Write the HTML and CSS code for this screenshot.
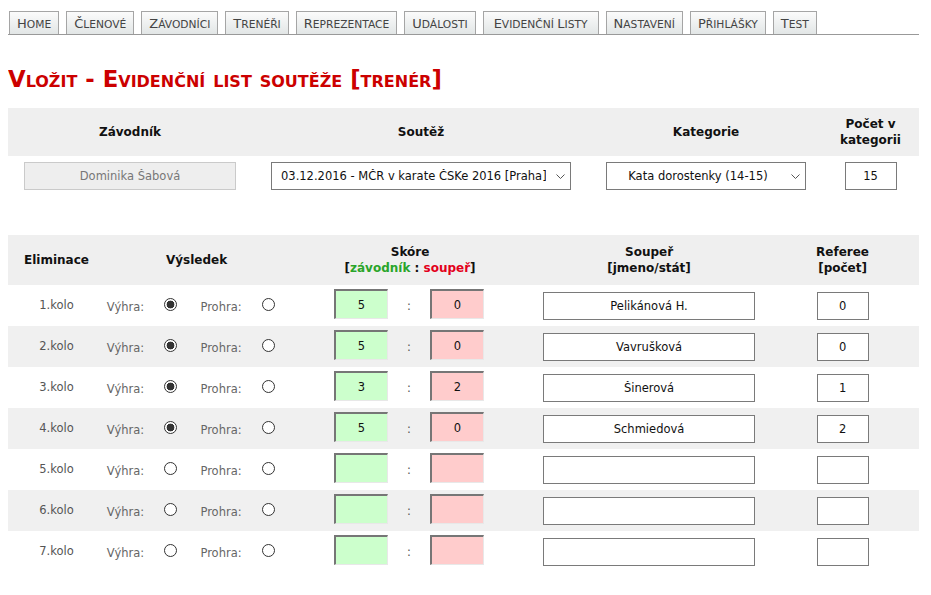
FILE: index.html
```html
<!DOCTYPE html>
<html lang="cs">
<head>
<meta charset="utf-8">
<title>Vložit - Evidenční list soutěže</title>
<link rel="stylesheet" href="styles.css">
</head>
<body>
<nav class="tabs">
  <a class="tab"><span class="cap">H</span>ome</a>
  <a class="tab"><span class="cap">Č</span>lenové</a>
  <a class="tab"><span class="cap">Z</span>ávodníci</a>
  <a class="tab"><span class="cap">T</span>renéři</a>
  <a class="tab"><span class="cap">R</span>eprezentace</a>
  <a class="tab"><span class="cap">U</span>dálosti</a>
  <a class="tab tab-wide"><span class="cap">E</span>videnční <span class="cap">L</span>isty</a>
  <a class="tab"><span class="cap">N</span>astavení</a>
  <a class="tab"><span class="cap">P</span>řihlášky</a>
  <a class="tab"><span class="cap">T</span>est</a>
</nav>

<h1 class="title">Vložit - Evidenční list soutěže [trenér]</h1>

<table class="info">
  <colgroup><col class="i1"><col class="i2"><col class="i3"><col class="i4"></colgroup>
  <thead>
    <tr class="head"><th>Závodník</th><th>Soutěž</th><th>Kategorie</th><th>Počet v<br>kategorii</th></tr>
  </thead>
  <tbody>
    <tr class="inforow">
      <td><input class="athlete" type="text" value="Dominika Šabová" readonly></td>
      <td><span class="selwrap sel-comp"><select class="sel"><option>03.12.2016 - MČR v karate ČSKe 2016 [Praha]</option></select><svg class="chev" width="9" height="5" viewBox="0 0 9 5"><path d="M0.5 0.5 L4.5 4.5 L8.5 0.5" fill="none" stroke="#555" stroke-width="1"/></svg></span></td>
      <td><span class="selwrap sel-cat"><select class="sel center"><option>Kata dorostenky (14-15)</option></select><svg class="chev" width="9" height="5" viewBox="0 0 9 5"><path d="M0.5 0.5 L4.5 4.5 L8.5 0.5" fill="none" stroke="#555" stroke-width="1"/></svg></span></td>
      <td><input class="box count" type="text" value="15"></td>
    </tr>
  </tbody>
</table>

<table class="rounds">
  <colgroup>
    <col class="c1"><col class="c2"><col class="c3"><col class="c4"><col class="c5">
    <col class="c6"><col class="c7"><col class="c8"><col class="c9"><col class="c10">
  </colgroup>
  <thead>
    <tr class="head2">
      <th>Eliminace</th>
      <th colspan="4">Výsledek</th>
      <th colspan="3">Skóre<br>[<span class="g">závodník</span> : <span class="r">soupeř</span>]</th>
      <th>Soupeř<br>[jmeno/stát]</th>
      <th>Referee<br>[počet]</th>
    </tr>
  </thead>
  <tbody>
    <tr>
      <td class="kolo">1.kolo</td><td class="lbl">Výhra:</td><td><input class="radio" type="radio" name="r1" checked></td><td class="lbl">Prohra:</td><td><input class="radio" type="radio" name="r1"></td>
      <td class="sl"><input class="score win" type="text" value="5"></td><td class="colon">:</td><td class="sr"><input class="score lose" type="text" value="0"></td>
      <td><input class="box opp" type="text" value="Pelikánová H."></td><td><input class="box ref" type="text" value="0"></td>
    </tr>
    <tr>
      <td class="kolo">2.kolo</td><td class="lbl">Výhra:</td><td><input class="radio" type="radio" name="r2" checked></td><td class="lbl">Prohra:</td><td><input class="radio" type="radio" name="r2"></td>
      <td class="sl"><input class="score win" type="text" value="5"></td><td class="colon">:</td><td class="sr"><input class="score lose" type="text" value="0"></td>
      <td><input class="box opp" type="text" value="Vavrušková"></td><td><input class="box ref" type="text" value="0"></td>
    </tr>
    <tr>
      <td class="kolo">3.kolo</td><td class="lbl">Výhra:</td><td><input class="radio" type="radio" name="r3" checked></td><td class="lbl">Prohra:</td><td><input class="radio" type="radio" name="r3"></td>
      <td class="sl"><input class="score win" type="text" value="3"></td><td class="colon">:</td><td class="sr"><input class="score lose" type="text" value="2"></td>
      <td><input class="box opp" type="text" value="Šinerová"></td><td><input class="box ref" type="text" value="1"></td>
    </tr>
    <tr>
      <td class="kolo">4.kolo</td><td class="lbl">Výhra:</td><td><input class="radio" type="radio" name="r4" checked></td><td class="lbl">Prohra:</td><td><input class="radio" type="radio" name="r4"></td>
      <td class="sl"><input class="score win" type="text" value="5"></td><td class="colon">:</td><td class="sr"><input class="score lose" type="text" value="0"></td>
      <td><input class="box opp" type="text" value="Schmiedová"></td><td><input class="box ref" type="text" value="2"></td>
    </tr>
    <tr>
      <td class="kolo">5.kolo</td><td class="lbl">Výhra:</td><td><input class="radio" type="radio" name="r5"></td><td class="lbl">Prohra:</td><td><input class="radio" type="radio" name="r5"></td>
      <td class="sl"><input class="score win" type="text" value=""></td><td class="colon">:</td><td class="sr"><input class="score lose" type="text" value=""></td>
      <td><input class="box opp" type="text" value=""></td><td><input class="box ref" type="text" value=""></td>
    </tr>
    <tr>
      <td class="kolo">6.kolo</td><td class="lbl">Výhra:</td><td><input class="radio" type="radio" name="r6"></td><td class="lbl">Prohra:</td><td><input class="radio" type="radio" name="r6"></td>
      <td class="sl"><input class="score win" type="text" value=""></td><td class="colon">:</td><td class="sr"><input class="score lose" type="text" value=""></td>
      <td><input class="box opp" type="text" value=""></td><td><input class="box ref" type="text" value=""></td>
    </tr>
    <tr>
      <td class="kolo">7.kolo</td><td class="lbl">Výhra:</td><td><input class="radio" type="radio" name="r7"></td><td class="lbl">Prohra:</td><td><input class="radio" type="radio" name="r7"></td>
      <td class="sl"><input class="score win" type="text" value=""></td><td class="colon">:</td><td class="sr"><input class="score lose" type="text" value=""></td>
      <td><input class="box opp" type="text" value=""></td><td><input class="box ref" type="text" value=""></td>
    </tr>
  </tbody>
</table>
</body>
</html>
```

FILE: styles.css
```css
body {
  margin: 8px;
  font-family: "DejaVu Sans", Verdana, sans-serif;
  font-size: 11.5px;
  color: #222;
  background: #fff;
}

/* navigation tabs */
.tabs {
  display: flex;
  gap: 7px;
  width: 910px;
  height: 23px;
  padding: 3px 0 0 1px;
  border-bottom: 1px solid #999;
}
.tab {
  box-sizing: border-box;
  display: block;
  height: 23px;
  padding: 0 7px;
  border: 1px solid #a5a5a5;
  border-bottom: 0;
  background: linear-gradient(#fbfbfb, #e2e6e6);
  font-size: 10.7px;
  line-height: 23px;
  text-transform: uppercase;
  white-space: nowrap;
  color: #444;
  cursor: pointer;
}
.tab-wide { padding: 0 10px; }
.cap { font-size: 13px; }

/* title */
.title {
  margin: 31px 0 16px;
  font-size: 22.8px;
  font-weight: bold;
  font-variant: small-caps;
  color: #c00;
}

/* tables */
table {
  width: 911px;
  border-collapse: collapse;
  border-spacing: 0;
  table-layout: fixed;
}
th {
  font-size: 12px;
  font-weight: bold;
  color: #111;
  text-align: center;
  padding: 0;
  line-height: 16px;
}
td {
  padding: 0;
  text-align: center;
}
.head { height: 48px; background: #efefef; }
.inforow { height: 40px; }
.i1 { width: 244px; }
.i2 { width: 338px; }
.i3 { width: 232px; }
.i4 { width: 97px; }

input {
  font-family: "DejaVu Sans", Verdana, sans-serif;
  font-size: 11.5px;
  box-sizing: border-box;
  text-align: center;
  color: #111;
  margin: 0;
  vertical-align: middle;
}
.athlete {
  width: 212px;
  height: 28px;
  background: #eee;
  border: 1px solid #cacaca;
  color: #777;
}
.box {
  height: 28px;
  border: 1px solid #7a7a7a;
  background: #fff;
}
.count { width: 52px; }

.selwrap {
  position: relative;
  display: inline-block;
  vertical-align: middle;
}
.sel {
  appearance: none;
  -webkit-appearance: none;
  box-sizing: border-box;
  height: 28px;
  border: 1px solid #7a7a7a;
  background: #fff;
  font-family: "DejaVu Sans", Verdana, sans-serif;
  font-size: 11.5px;
  color: #111;
  padding: 0 24px 0 9px;
  margin: 0;
}
.sel-comp .sel { width: 300px; }
.sel-cat .sel { width: 200px; text-align-last: center; padding: 0 18px 0 2px; }
.chev {
  position: absolute;
  right: 6px;
  top: 12px;
  pointer-events: none;
}

/* rounds table */
.rounds { margin-top: 39px; }
.head2 { height: 50px; background: #efefef; }
.c1 { width: 97px; }
.c2 { width: 41px; }
.c3 { width: 48px; }
.c4 { width: 54px; }
.c5 { width: 40px; }
.c6 { width: 100px; }
.c7 { width: 42px; }
.c8 { width: 102px; }
.c9 { width: 234px; }
.c10 { width: 153px; }

.rounds tbody tr { height: 41px; }
.rounds tbody tr:nth-child(even) { background: #f0f0f0; }
.kolo { color: #555; padding-bottom: 1px; }
.lbl { color: #666; padding-top: 3px; }
.colon { color: #555; }
.sl { text-align: right; }
.sr { text-align: left; }
.g { color: #2aa52a; }
.r { color: #e3001b; }

.radio {
  appearance: none;
  -webkit-appearance: none;
  width: 13px;
  height: 13px;
  border: 1px solid #333;
  border-radius: 50%;
  background: #fff;
  margin: 0 0 3px 0;
}
.radio:checked {
  background: radial-gradient(circle, #333 0 3.6px, #fff 4.2px);
}

.score {
  width: 54px;
  height: 30px;
  border-style: solid;
  border-width: 2px 1px 1px 2px;
  border-color: #767676 #e8e8e8 #e8e8e8 #767676;
  margin-bottom: 3px;
}
.win { background: #ccffcc; }
.lose { background: #ffcccc; }
.opp { width: 212px; }
.ref { width: 52px; }
```
